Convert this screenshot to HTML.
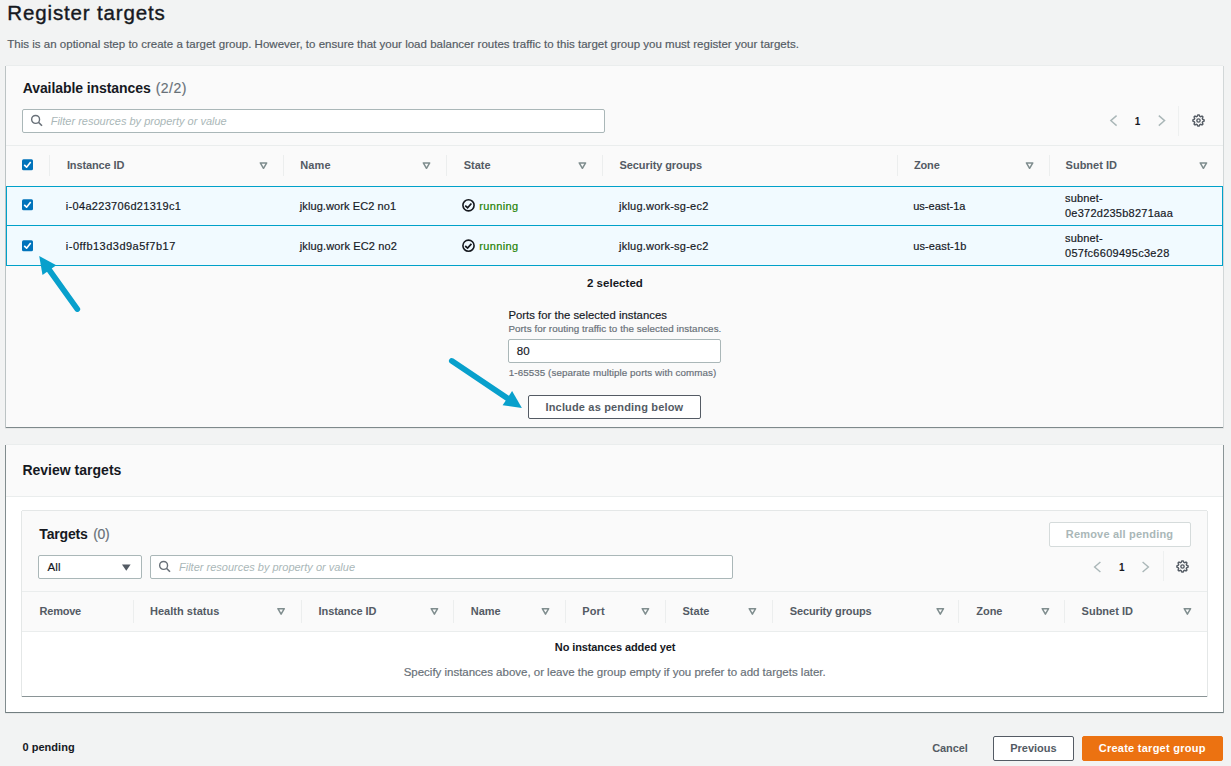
<!DOCTYPE html>
<html><head><meta charset="utf-8"><title>Register targets</title>
<style>
*{box-sizing:border-box;margin:0;padding:0}
html,body{width:1231px;height:766px;overflow:hidden}
body{background:#f2f3f3;font-family:"Liberation Sans",sans-serif;color:#16191f;position:relative;font-size:12px}
.a{position:absolute;white-space:nowrap;line-height:1}
svg{position:absolute;overflow:visible}
</style></head><body>
<div style="position:absolute;left:6px;top:65px;width:1217px;height:362px;background:#fafafa;border-top:1px solid #eaeded;"></div><div style="position:absolute;left:5px;top:66px;width:1px;height:362px;background:#bcc3c4;"></div><div style="position:absolute;left:1223px;top:66px;width:1px;height:362px;background:#d2d7d8;"></div><div style="position:absolute;left:6px;top:427px;width:1217px;height:1px;background:#7e898b;"></div><div style="position:absolute;left:5px;top:428px;width:1219px;height:1px;background:#e6e8e8;"></div>
<div style="position:absolute;left:22px;top:109px;width:583px;height:24px;background:#fff;border:1px solid #aab7b8;border-radius:2px;"></div>
<div style="position:absolute;left:6px;top:145px;width:1217px;height:1px;background:#eaeded;"></div>
<div style="position:absolute;left:49px;top:155px;width:1px;height:21px;background:#eceeee;"></div>
<div style="position:absolute;left:283px;top:155px;width:1px;height:21px;background:#eceeee;"></div>
<div style="position:absolute;left:446px;top:155px;width:1px;height:21px;background:#eceeee;"></div>
<div style="position:absolute;left:602px;top:155px;width:1px;height:21px;background:#eceeee;"></div>
<div style="position:absolute;left:897px;top:155px;width:1px;height:21px;background:#eceeee;"></div>
<div style="position:absolute;left:1049px;top:155px;width:1px;height:21px;background:#eceeee;"></div>
<div style="position:absolute;left:1178px;top:106px;width:1px;height:30px;background:#eef0f0;"></div>
<div style="position:absolute;left:6px;top:186px;width:1217px;height:40px;background:#f1faff;border:1px solid #00a1c9;"></div>
<div style="position:absolute;left:6px;top:225px;width:1217px;height:41px;background:#f1faff;border:1px solid #00a1c9;"></div>
<div style="position:absolute;left:508px;top:339px;width:213px;height:24px;background:#fff;border:1px solid #aab7b8;border-radius:2px;"></div>
<div style="position:absolute;left:528px;top:395px;width:173px;height:24px;background:#fff;border:1px solid #545b64;border-radius:2px;"></div>
<div style="position:absolute;left:6px;top:444px;width:1217px;height:268px;background:#fff;border-top:1px solid #eaeded;"></div><div style="position:absolute;left:5px;top:445px;width:1px;height:268px;background:#818c8e;"></div><div style="position:absolute;left:1223px;top:445px;width:1px;height:268px;background:#8b9597;"></div><div style="position:absolute;left:6px;top:712px;width:1217px;height:1px;background:#727e80;"></div><div style="position:absolute;left:5px;top:713px;width:1219px;height:1px;background:#e6e8e8;"></div>
<div style="position:absolute;left:6px;top:445px;width:1217px;height:51px;background:#fafafa;"></div>
<div style="position:absolute;left:6px;top:496px;width:1217px;height:1px;background:#eaeded;"></div>
<div style="position:absolute;left:22px;top:510px;width:1185px;height:186px;background:#fff;border-top:1px solid #e4e7e7;"></div><div style="position:absolute;left:21px;top:511px;width:1px;height:186px;background:#e4e7e7;"></div><div style="position:absolute;left:1207px;top:511px;width:1px;height:186px;background:#e4e7e7;"></div><div style="position:absolute;left:22px;top:696px;width:1185px;height:1px;background:#8a9496;"></div>
<div style="position:absolute;left:22px;top:511px;width:1185px;height:120px;background:#fafafa;"></div>
<div style="position:absolute;left:22px;top:591px;width:1185px;height:1px;background:#eaeded;"></div>
<div style="position:absolute;left:22px;top:631px;width:1185px;height:1px;background:#eaeded;"></div>
<div style="position:absolute;left:38px;top:555px;width:104px;height:24px;background:#fff;border:1px solid #aab7b8;border-radius:2px;"></div>
<div style="position:absolute;left:150px;top:555px;width:583px;height:24px;background:#fff;border:1px solid #aab7b8;border-radius:2px;"></div>
<div style="position:absolute;left:1049px;top:522px;width:142px;height:25px;background:#fff;border:1px solid #d5dbdb;border-radius:2px;"></div>
<div style="position:absolute;left:1163px;top:551px;width:1px;height:30px;background:#eef0f0;"></div>
<div style="position:absolute;left:133px;top:600px;width:1px;height:23px;background:#eceeee;"></div>
<div style="position:absolute;left:301px;top:600px;width:1px;height:23px;background:#eceeee;"></div>
<div style="position:absolute;left:453px;top:600px;width:1px;height:23px;background:#eceeee;"></div>
<div style="position:absolute;left:565px;top:600px;width:1px;height:23px;background:#eceeee;"></div>
<div style="position:absolute;left:665px;top:600px;width:1px;height:23px;background:#eceeee;"></div>
<div style="position:absolute;left:772px;top:600px;width:1px;height:23px;background:#eceeee;"></div>
<div style="position:absolute;left:958px;top:600px;width:1px;height:23px;background:#eceeee;"></div>
<div style="position:absolute;left:1064px;top:600px;width:1px;height:23px;background:#eceeee;"></div>
<div style="position:absolute;left:993px;top:736px;width:81px;height:25px;background:#fff;border:1px solid #545b64;border-radius:2px;"></div>
<div style="position:absolute;left:1082px;top:736px;width:141px;height:25px;background:#ec7211;border:1px solid #ec7211;border-radius:2px;"></div>
<div class="a" id="x0" style="top:3px;font-size:20.5px;color:#16191f;-webkit-text-stroke:0.4px #16191f;letter-spacing:0.856px;left:7.30px;">Register targets</div>
<div class="a" id="x1" style="top:39px;font-size:11.5px;color:#545b64;-webkit-text-stroke:0.18px #545b64;letter-spacing:0.011px;left:7.30px;">This is an optional step to create a target group. However, to ensure that your load balancer routes traffic to this target group you must register your targets.</div>
<div class="a" id="x2" style="top:81px;font-size:14px;color:#16191f;font-weight:700;letter-spacing:-0.076px;left:22.70px;">Available instances</div>
<div class="a" id="x3" style="top:81px;font-size:14px;color:#687078;-webkit-text-stroke:0.18px #687078;letter-spacing:0.481px;left:155.70px;">(2/2)</div>
<div class="a" id="x4" style="top:116px;font-size:11px;color:#aab7b8;font-style:italic;letter-spacing:-0.002px;left:50.70px;">Filter resources by property or value</div>
<div class="a" id="x5" style="top:117px;font-size:10px;color:#16191f;font-weight:700;left:1137.5px;transform:translateX(-50%);">1</div>
<div class="a" id="x6" style="top:160px;font-size:11px;color:#545b64;font-weight:700;letter-spacing:-0.117px;left:66.90px;">Instance ID</div>
<div class="a" id="x7" style="top:160px;font-size:11px;color:#545b64;font-weight:700;letter-spacing:0.108px;left:300.30px;">Name</div>
<div class="a" id="x8" style="top:160px;font-size:11px;color:#545b64;font-weight:700;letter-spacing:-0.021px;left:463.80px;">State</div>
<div class="a" id="x9" style="top:160px;font-size:11px;color:#545b64;font-weight:700;letter-spacing:-0.083px;left:619.50px;">Security groups</div>
<div class="a" id="x10" style="top:160px;font-size:11px;color:#545b64;font-weight:700;letter-spacing:-0.170px;left:914.00px;">Zone</div>
<div class="a" id="x11" style="top:160px;font-size:11px;color:#545b64;font-weight:700;letter-spacing:-0.005px;left:1065.60px;">Subnet ID</div>
<div class="a" id="x12" style="top:201px;font-size:11px;color:#16191f;-webkit-text-stroke:0.18px #16191f;letter-spacing:0.311px;left:65.80px;">i-04a223706d21319c1</div>
<div class="a" id="x13" style="top:201px;font-size:11px;color:#16191f;-webkit-text-stroke:0.18px #16191f;letter-spacing:0.090px;left:299.80px;">jklug.work EC2 no1</div>
<div class="a" id="x14" style="top:201px;font-size:11px;color:#1d8102;-webkit-text-stroke:0.18px #1d8102;letter-spacing:0.385px;left:479.20px;">running</div>
<div class="a" id="x15" style="top:201px;font-size:11px;color:#16191f;-webkit-text-stroke:0.18px #16191f;letter-spacing:0.230px;left:619.00px;">jklug.work-sg-ec2</div>
<div class="a" id="x16" style="top:201px;font-size:11px;color:#16191f;-webkit-text-stroke:0.18px #16191f;letter-spacing:0.032px;left:913.20px;">us-east-1a</div>
<div class="a" id="x17" style="top:193px;font-size:11px;color:#16191f;-webkit-text-stroke:0.18px #16191f;letter-spacing:0.171px;left:1065.00px;">subnet-</div>
<div class="a" id="x18" style="top:208px;font-size:11px;color:#16191f;-webkit-text-stroke:0.18px #16191f;letter-spacing:0.240px;left:1065.00px;">0e372d235b8271aaa</div>
<div class="a" id="x19" style="top:241px;font-size:11px;color:#16191f;-webkit-text-stroke:0.18px #16191f;letter-spacing:0.488px;left:65.80px;">i-0ffb13d3d9a5f7b17</div>
<div class="a" id="x20" style="top:241px;font-size:11px;color:#16191f;-webkit-text-stroke:0.18px #16191f;letter-spacing:0.134px;left:299.80px;">jklug.work EC2 no2</div>
<div class="a" id="x21" style="top:241px;font-size:11px;color:#1d8102;-webkit-text-stroke:0.18px #1d8102;letter-spacing:0.385px;left:479.20px;">running</div>
<div class="a" id="x22" style="top:241px;font-size:11px;color:#16191f;-webkit-text-stroke:0.18px #16191f;letter-spacing:0.230px;left:619.00px;">jklug.work-sg-ec2</div>
<div class="a" id="x23" style="top:241px;font-size:11px;color:#16191f;-webkit-text-stroke:0.18px #16191f;letter-spacing:0.122px;left:913.20px;">us-east-1b</div>
<div class="a" id="x24" style="top:233px;font-size:11px;color:#16191f;-webkit-text-stroke:0.18px #16191f;letter-spacing:0.171px;left:1065.00px;">subnet-</div>
<div class="a" id="x25" style="top:248px;font-size:11px;color:#16191f;-webkit-text-stroke:0.18px #16191f;letter-spacing:0.287px;left:1065.00px;">057fc6609495c3e28</div>
<div class="a" id="x26" style="top:278px;font-size:11.5px;color:#16191f;font-weight:700;letter-spacing:0.037px;left:586.90px;">2 selected</div>
<div class="a" id="x27" style="top:310px;font-size:11.3px;color:#16191f;-webkit-text-stroke:0.18px #16191f;letter-spacing:0.027px;left:508.40px;">Ports for the selected instances</div>
<div class="a" id="x28" style="top:324px;font-size:9.8px;color:#687078;-webkit-text-stroke:0.18px #687078;letter-spacing:0.068px;left:508.40px;">Ports for routing traffic to the selected instances.</div>
<div class="a" id="x29" style="top:346px;font-size:11.5px;color:#16191f;-webkit-text-stroke:0.18px #16191f;letter-spacing:0.152px;left:516.80px;">80</div>
<div class="a" id="x30" style="top:368px;font-size:9.8px;color:#687078;-webkit-text-stroke:0.18px #687078;letter-spacing:0.075px;left:508.80px;">1-65535 (separate multiple ports with commas)</div>
<div class="a" id="x31" style="top:402px;font-size:11px;color:#545b64;font-weight:700;letter-spacing:0.164px;left:545.50px;">Include as pending below</div>
<div class="a" id="x32" style="top:463px;font-size:14px;color:#16191f;font-weight:700;letter-spacing:0.012px;left:22.40px;">Review targets</div>
<div class="a" id="x33" style="top:527px;font-size:14px;color:#16191f;font-weight:700;letter-spacing:-0.164px;left:39.30px;">Targets</div>
<div class="a" id="x34" style="top:527px;font-size:14px;color:#687078;-webkit-text-stroke:0.18px #687078;letter-spacing:-0.375px;left:93.20px;">(0)</div>
<div class="a" id="x35" style="top:562px;font-size:11.5px;color:#16191f;-webkit-text-stroke:0.18px #16191f;letter-spacing:0.173px;left:47.50px;">All</div>
<div class="a" id="x36" style="top:562px;font-size:11px;color:#aab7b8;font-style:italic;letter-spacing:-0.002px;left:179.00px;">Filter resources by property or value</div>
<div class="a" id="x37" style="top:529px;font-size:11px;color:#aab7b8;font-weight:700;letter-spacing:0.199px;left:1065.75px;">Remove all pending</div>
<div class="a" id="x38" style="top:563px;font-size:10px;color:#16191f;font-weight:700;left:1121.7px;transform:translateX(-50%);">1</div>
<div class="a" id="x39" style="top:606px;font-size:11px;color:#545b64;font-weight:700;letter-spacing:-0.216px;left:39.50px;">Remove</div>
<div class="a" id="x40" style="top:606px;font-size:11px;color:#545b64;font-weight:700;letter-spacing:0.025px;left:150.00px;">Health status</div>
<div class="a" id="x41" style="top:606px;font-size:11px;color:#545b64;font-weight:700;letter-spacing:-0.081px;left:318.60px;">Instance ID</div>
<div class="a" id="x42" style="top:606px;font-size:11px;color:#545b64;font-weight:700;letter-spacing:0.008px;left:470.70px;">Name</div>
<div class="a" id="x43" style="top:606px;font-size:11px;color:#545b64;font-weight:700;letter-spacing:0.100px;left:582.30px;">Port</div>
<div class="a" id="x44" style="top:606px;font-size:11px;color:#545b64;font-weight:700;letter-spacing:0.039px;left:682.40px;">State</div>
<div class="a" id="x45" style="top:606px;font-size:11px;color:#545b64;font-weight:700;letter-spacing:-0.123px;left:789.70px;">Security groups</div>
<div class="a" id="x46" style="top:606px;font-size:11px;color:#545b64;font-weight:700;letter-spacing:-0.045px;left:976.30px;">Zone</div>
<div class="a" id="x47" style="top:606px;font-size:11px;color:#545b64;font-weight:700;letter-spacing:-0.005px;left:1081.60px;">Subnet ID</div>
<div class="a" id="x48" style="top:642px;font-size:11px;color:#16191f;font-weight:700;letter-spacing:-0.103px;left:554.80px;">No instances added yet</div>
<div class="a" id="x49" style="top:667px;font-size:11.5px;color:#687078;-webkit-text-stroke:0.18px #687078;letter-spacing:-0.014px;left:403.70px;">Specify instances above, or leave the group empty if you prefer to add targets later.</div>
<div class="a" id="x50" style="top:742px;font-size:11px;color:#16191f;font-weight:700;letter-spacing:0.039px;left:22.40px;">0 pending</div>
<div class="a" id="x51" style="top:743px;font-size:11px;color:#545b64;font-weight:700;letter-spacing:-0.113px;left:932.20px;">Cancel</div>
<div class="a" id="x52" style="top:743px;font-size:11px;color:#545b64;font-weight:700;letter-spacing:-0.021px;left:1010.25px;">Previous</div>
<div class="a" id="x53" style="top:743px;font-size:11px;color:#fff;font-weight:700;letter-spacing:0.259px;left:1098.70px;">Create target group</div>
<svg style="left:0;top:0" width="1231" height="766" viewBox="0 0 1231 766">
<g transform="translate(22 159.2)"><rect x="0" y="0" width="11" height="11" rx="1.5" fill="#0073bb"/><path d="M2.2 5.7 L4.6 8 L8.7 2.7" fill="none" stroke="#fff" stroke-width="1.6" stroke-linejoin="round" stroke-linecap="butt"/></g>
<g transform="translate(22 199.2)"><rect x="0" y="0" width="11" height="11" rx="1.5" fill="#0073bb"/><path d="M2.2 5.7 L4.6 8 L8.7 2.7" fill="none" stroke="#fff" stroke-width="1.6" stroke-linejoin="round" stroke-linecap="butt"/></g>
<g transform="translate(22 240.2)"><rect x="0" y="0" width="11" height="11" rx="1.5" fill="#0073bb"/><path d="M2.2 5.7 L4.6 8 L8.7 2.7" fill="none" stroke="#fff" stroke-width="1.6" stroke-linejoin="round" stroke-linecap="butt"/></g>
<g transform="translate(31 115.5)"><circle cx="4.6" cy="3.9" r="3.95" fill="none" stroke="#687078" stroke-width="1.4"/><path d="M7.4 6.7 L11 10.3" stroke="#687078" stroke-width="1.6" fill="none"/></g>
<g transform="translate(159 561.5)"><circle cx="4.6" cy="3.9" r="3.95" fill="none" stroke="#687078" stroke-width="1.4"/><path d="M7.4 6.7 L11 10.3" stroke="#687078" stroke-width="1.6" fill="none"/></g>
<g transform="translate(259.5 162.2)"><path d="M0.8 0.7 H7.2 L4 6.1 Z" fill="none" stroke="#7f8d8e" stroke-width="1.5" stroke-linejoin="round"/></g>
<g transform="translate(422.5 162.2)"><path d="M0.8 0.7 H7.2 L4 6.1 Z" fill="none" stroke="#7f8d8e" stroke-width="1.5" stroke-linejoin="round"/></g>
<g transform="translate(578.4 162.2)"><path d="M0.8 0.7 H7.2 L4 6.1 Z" fill="none" stroke="#7f8d8e" stroke-width="1.5" stroke-linejoin="round"/></g>
<g transform="translate(1025.6 162.2)"><path d="M0.8 0.7 H7.2 L4 6.1 Z" fill="none" stroke="#7f8d8e" stroke-width="1.5" stroke-linejoin="round"/></g>
<g transform="translate(1199.4 162.2)"><path d="M0.8 0.7 H7.2 L4 6.1 Z" fill="none" stroke="#7f8d8e" stroke-width="1.5" stroke-linejoin="round"/></g>
<g transform="translate(277.1 608.0)"><path d="M0.8 0.7 H7.2 L4 6.1 Z" fill="none" stroke="#7f8d8e" stroke-width="1.5" stroke-linejoin="round"/></g>
<g transform="translate(430.4 608.0)"><path d="M0.8 0.7 H7.2 L4 6.1 Z" fill="none" stroke="#7f8d8e" stroke-width="1.5" stroke-linejoin="round"/></g>
<g transform="translate(541.5 608.0)"><path d="M0.8 0.7 H7.2 L4 6.1 Z" fill="none" stroke="#7f8d8e" stroke-width="1.5" stroke-linejoin="round"/></g>
<g transform="translate(641.4 608.0)"><path d="M0.8 0.7 H7.2 L4 6.1 Z" fill="none" stroke="#7f8d8e" stroke-width="1.5" stroke-linejoin="round"/></g>
<g transform="translate(748.4 608.0)"><path d="M0.8 0.7 H7.2 L4 6.1 Z" fill="none" stroke="#7f8d8e" stroke-width="1.5" stroke-linejoin="round"/></g>
<g transform="translate(936.3 608.0)"><path d="M0.8 0.7 H7.2 L4 6.1 Z" fill="none" stroke="#7f8d8e" stroke-width="1.5" stroke-linejoin="round"/></g>
<g transform="translate(1041.4 608.0)"><path d="M0.8 0.7 H7.2 L4 6.1 Z" fill="none" stroke="#7f8d8e" stroke-width="1.5" stroke-linejoin="round"/></g>
<g transform="translate(1183.4 608.0)"><path d="M0.8 0.7 H7.2 L4 6.1 Z" fill="none" stroke="#7f8d8e" stroke-width="1.5" stroke-linejoin="round"/></g>
<g transform="translate(1113.7 120.6)"><path d="M2.9 -5 L-2.9 0 L2.9 5" fill="none" stroke="#aab7b8" stroke-width="1.4" stroke-linejoin="miter"/></g>
<g transform="translate(1161.7 120.6)"><path d="M-2.9 -5 L2.9 0 L-2.9 5" fill="none" stroke="#aab7b8" stroke-width="1.4" stroke-linejoin="miter"/></g>
<g transform="translate(1097.5 567)"><path d="M2.9 -5 L-2.9 0 L2.9 5" fill="none" stroke="#aab7b8" stroke-width="1.4" stroke-linejoin="miter"/></g>
<g transform="translate(1145.5 567)"><path d="M-2.9 -5 L2.9 0 L-2.9 5" fill="none" stroke="#aab7b8" stroke-width="1.4" stroke-linejoin="miter"/></g>
<g transform="translate(1198.5 120.5)"><path d="M4.17 -1.24 L5.62 -0.62 L5.62 0.62 L4.17 1.24 L3.83 2.07 L4.41 3.53 L3.53 4.41 L2.07 3.83 L1.24 4.17 L0.62 5.62 L-0.62 5.62 L-1.24 4.17 L-2.07 3.83 L-3.53 4.41 L-4.41 3.53 L-3.83 2.07 L-4.17 1.24 L-5.62 0.62 L-5.62 -0.62 L-4.17 -1.24 L-3.83 -2.07 L-4.41 -3.53 L-3.53 -4.41 L-2.07 -3.83 L-1.24 -4.17 L-0.62 -5.62 L0.62 -5.62 L1.24 -4.17 L2.07 -3.83 L3.53 -4.41 L4.41 -3.53 L3.83 -2.07 Z" fill="none" stroke="#545b64" stroke-width="1.4" stroke-linejoin="miter"/><circle cx="0" cy="0" r="1.65" fill="none" stroke="#545b64" stroke-width="1.4"/></g>
<g transform="translate(1182.5 566.5)"><path d="M4.17 -1.24 L5.62 -0.62 L5.62 0.62 L4.17 1.24 L3.83 2.07 L4.41 3.53 L3.53 4.41 L2.07 3.83 L1.24 4.17 L0.62 5.62 L-0.62 5.62 L-1.24 4.17 L-2.07 3.83 L-3.53 4.41 L-4.41 3.53 L-3.83 2.07 L-4.17 1.24 L-5.62 0.62 L-5.62 -0.62 L-4.17 -1.24 L-3.83 -2.07 L-4.41 -3.53 L-3.53 -4.41 L-2.07 -3.83 L-1.24 -4.17 L-0.62 -5.62 L0.62 -5.62 L1.24 -4.17 L2.07 -3.83 L3.53 -4.41 L4.41 -3.53 L3.83 -2.07 Z" fill="none" stroke="#545b64" stroke-width="1.4" stroke-linejoin="miter"/><circle cx="0" cy="0" r="1.65" fill="none" stroke="#545b64" stroke-width="1.4"/></g>
<g transform="translate(468.5 205.3)"><circle cx="0" cy="0" r="5.6" fill="none" stroke="#16191f" stroke-width="1.6"/><path d="M-3.3 0.3 L-0.9 2.4 L2.9 -1.8" fill="none" stroke="#16191f" stroke-width="1.7"/></g>
<g transform="translate(468.5 245.7)"><circle cx="0" cy="0" r="5.6" fill="none" stroke="#16191f" stroke-width="1.6"/><path d="M-3.3 0.3 L-0.9 2.4 L2.9 -1.8" fill="none" stroke="#16191f" stroke-width="1.7"/></g>
<g transform="translate(121.8 564.2)"><path d="M0.2 0.2 H8.8 L4.5 6.6 Z" fill="#545b64"/></g>
<g transform="translate(0 0)"><path d="M77.3 309.1 L48.2 268.5" stroke="#08a0cc" stroke-width="5.7" stroke-linecap="round" fill="none"/><path d="M39.2 255.9 L56.3 265.2 L42.5 275.1 Z" fill="#08a0cc"/></g>
<g transform="translate(0 0)"><path d="M451.8 360.9 L509.0 399.3" stroke="#08a0cc" stroke-width="5.7" stroke-linecap="round" fill="none"/><path d="M521.9 407.9 L502.6 405.2 L512.1 391.1 Z" fill="#08a0cc"/></g>
</svg>
</body></html>
